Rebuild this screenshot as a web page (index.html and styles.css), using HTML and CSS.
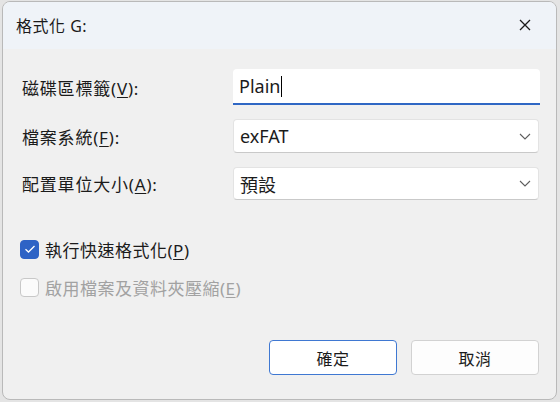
FILE: index.html
```html
<!DOCTYPE html>
<html lang="zh-Hant">
<head>
<meta charset="utf-8">
<title>格式化 G:</title>
<link rel="stylesheet" href="styles.css">
</head>
<body>
<div class="dialog">
  <div class="titlebar">
    <span class="title">格式化 G:</span>
    <span class="close" aria-label="關閉">
      <svg width="12" height="12" viewBox="0 0 12 12"><path d="M1 1 L11 11 M11 1 L1 11" stroke="#1b1b1b" stroke-width="1.3" fill="none"/></svg>
    </span>
  </div>
  <div class="content">
    <div class="form">
      <label class="label">磁碟區標籤(<u>V</u>):</label>
      <div class="input"><span>Plain</span><span class="caret"></span></div>

      <label class="label">檔案系統(<u>F</u>):</label>
      <div class="select"><span>exFAT</span>
        <svg class="chev" width="12" height="7" viewBox="0 0 12 7"><path d="M1 1 L6 6 L11 1" stroke="#5f5f5f" stroke-width="1.1" fill="none"/></svg>
      </div>

      <label class="label">配置單位大小(<u>A</u>):</label>
      <div class="select"><span>預設</span>
        <svg class="chev" width="12" height="7" viewBox="0 0 12 7"><path d="M1 1 L6 6 L11 1" stroke="#5f5f5f" stroke-width="1.1" fill="none"/></svg>
      </div>
    </div>

    <div class="checks">
      <div class="check">
        <span class="box checked">
          <svg width="12" height="10" viewBox="0 0 12 10"><path d="M1.5 5.2 L4.5 8 L10.5 2" stroke="#ffffff" stroke-width="1.3" fill="none"/></svg>
        </span>
        <span class="ctext">執行快速格式化(<u>P</u>)</span>
      </div>
      <div class="check disabled">
        <span class="box"></span>
        <span class="ctext">啟用檔案及資料夾壓縮(<u>E</u>)</span>
      </div>
    </div>

    <div class="buttons">
      <button class="btn primary">確定</button>
      <button class="btn">取消</button>
    </div>
  </div>
</div>
</body>
</html>
```
FILE: styles.css
```css
html, body {
  margin: 0;
  padding: 0;
}
body {
  width: 560px;
  height: 402px;
  background: #e4e4e4;
  font-family: "Noto Sans", "Noto Sans CJK TC", sans-serif;
  font-size: 17px;
  color: #1b1b1b;
  overflow: hidden;
}
.dialog {
  box-sizing: border-box;
  margin: 1px 0 0 2px;
  width: 555px;
  height: 399px;
  border: 1px solid #b9b9b9;
  border-radius: 8px;
  background: #f0f0f0;
  overflow: hidden;
  display: flex;
  flex-direction: column;
}
.titlebar {
  height: 45px;
  background: #eff3f8;
  display: flex;
  align-items: center;
  justify-content: space-between;
  padding: 0 25px 2px 13px;
  flex: none;
}
.title {
  font-size: 16px;
  letter-spacing: 0.5px;
}
.close {
  display: flex;
  width: 12px;
  height: 12px;
}
.content {
  flex: 1;
  padding: 20px 0 0 17px;
  display: flex;
  flex-direction: column;
}
.form {
  display: grid;
  grid-template-columns: 213px 307px;
  grid-auto-rows: auto;
  row-gap: 14px;
  align-items: center;
}
.label {
  white-space: nowrap;
  letter-spacing: 0.8px;
  padding-left: 2px;
}
u {
  text-decoration-thickness: 1px;
  text-underline-offset: 2px;
}
.input {
  box-sizing: border-box;
  height: 36px;
  background: #ffffff;
  border-radius: 4px 4px 0 0;
  border-bottom: 2px solid #2f67c4;
  display: flex;
  align-items: center;
  padding: 0 0 0 6px;
  font-size: 18px;
}
.caret {
  display: inline-block;
  width: 1px;
  height: 21px;
  background: #000;
  margin-left: 1px;
}
.select {
  box-sizing: border-box;
  width: 306px;
  height: 34px;
  background: #ffffff;
  border: 1px solid #e3e3e3;
  border-bottom-color: #c9c9c9;
  border-radius: 4px;
  display: flex;
  align-items: center;
  justify-content: space-between;
  padding: 0 7px 0 6px;
  font-size: 18px;
}
.select:last-child {
  height: 33px;
}
.checks {
  margin-top: 39px;
  display: flex;
  flex-direction: column;
  gap: 18px;
}
.check {
  display: flex;
  align-items: center;
  gap: 6px;
  height: 20px;
}
.ctext {
  letter-spacing: 0.5px;
}
.box {
  box-sizing: border-box;
  width: 19px;
  height: 19px;
  border-radius: 4px;
  border: 1px solid #c8c8c8;
  background: #fbfbfb;
  display: flex;
  align-items: center;
  justify-content: center;
}
.box.checked {
  background: #2e63c5;
  border-color: #2e63c5;
}
.disabled .ctext {
  color: #a2a2a2;
}
.buttons {
  margin-top: 43px;
  display: flex;
  justify-content: flex-end;
  gap: 14px;
  padding-right: 17px;
}
.btn {
  box-sizing: border-box;
  width: 128px;
  height: 35px;
  background: #fdfdfd;
  border: 1px solid #d2d2d2;
  border-radius: 4px;
  font-family: inherit;
  font-size: 16px;
  letter-spacing: 0.5px;
  color: #1b1b1b;
  padding: 0;
}
.btn.primary {
  background: #ffffff;
  border-color: #3f78d2;
}
```
